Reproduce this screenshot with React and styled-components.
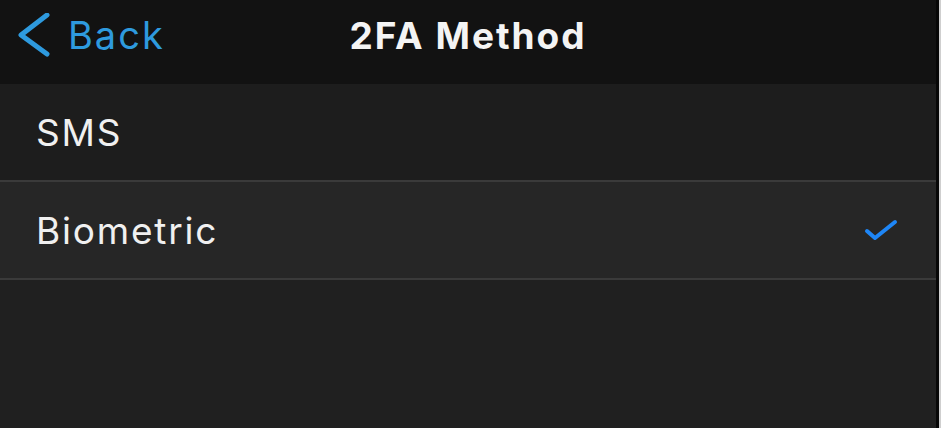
import React from 'react'
import styled, { createGlobalStyle } from 'styled-components'

const GlobalStyle = createGlobalStyle`
  html, body {
    margin: 0;
    padding: 0;
    background: #cfcfcf;
  }
  #root {
    height: 428px;
  }
`

const Screen = styled.div`
  width: 936px;
  height: 428px;
  display: flex;
  flex-direction: column;
  background: #202020;
  border-right: 3px solid #070707;
  font-family: Inter, "Liberation Sans", sans-serif;
  overflow: hidden;
`

const NavBar = styled.header`
  height: 84px;
  box-sizing: border-box;
  padding-bottom: 14px;
  display: grid;
  grid-template-columns: 1fr auto 1fr;
  align-items: center;
  background: #121212;
`

const BackButton = styled.button`
  display: flex;
  align-items: center;
  gap: 18px;
  padding: 0 0 0 18px;
  border: none;
  background: none;
  color: #2e9ade;
  font-family: inherit;
  font-size: 38px;
  letter-spacing: 2px;
  cursor: pointer;
  justify-self: start;
`

const Title = styled.h1`
  margin: 0;
  color: #f4f4f4;
  font-size: 37px;
  font-weight: 700;
  letter-spacing: 2px;
`

const List = styled.ul`
  list-style: none;
  margin: 0;
  padding: 0;
`

const Row = styled.li`
  height: 96px;
  display: flex;
  align-items: center;
  justify-content: space-between;
  padding: 0 38px 0 36px;
  background: ${({ $selected }) => ($selected ? '#262626' : '#1d1d1d')};
  border-bottom: 2px solid #3a3a3a;
  color: #f0f0f0;
  font-size: 37px;
  letter-spacing: 1.8px;
`

const Chevron = () => (
  <svg width="32" height="44" viewBox="0 0 32 44">
    <polyline
      points="29,2 3,22 29,41"
      fill="none"
      stroke="currentColor"
      strokeWidth="5"
      strokeLinecap="round"
      strokeLinejoin="round"
    />
  </svg>
)

const Check = () => (
  <svg width="34" height="22" viewBox="0 0 34 22">
    <polyline
      points="3,12 11,19 31,3"
      fill="none"
      stroke="#1e86f6"
      strokeWidth="4"
      strokeLinecap="round"
      strokeLinejoin="round"
    />
  </svg>
)

const methods = [
  { id: 'sms', label: 'SMS' },
  { id: 'bio', label: 'Biometric' },
]

export default function App() {
  const selected = 'bio'
  return (
    <>
      <GlobalStyle />
      <Screen>
        <NavBar>
          <BackButton>
            <Chevron />
            Back
          </BackButton>
          <Title>2FA Method</Title>
        </NavBar>
        <List>
          {methods.map((m) => (
            <Row key={m.id} $selected={m.id === selected}>
              {m.label}
              {m.id === selected && <Check />}
            </Row>
          ))}
        </List>
      </Screen>
    </>
  )
}
